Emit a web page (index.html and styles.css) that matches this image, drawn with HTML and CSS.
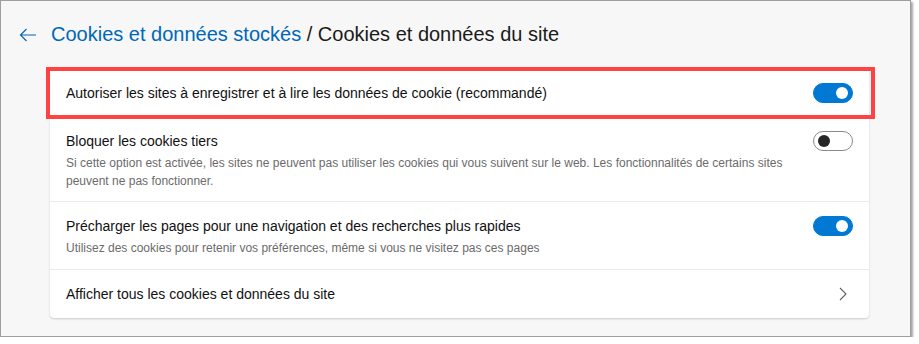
FILE: index.html
```html
<!DOCTYPE html>
<html>

<head>
    <title>Cookies et données du site</title>
    <link rel="stylesheet" href="styles.css">
</head>

<body>
    <div class="window">
        <div class="header">
            <button class="back" aria-label="Retour">
                <svg width="18" height="14" viewBox="0 0 18 14">
                    <path d="M17 7H1.5M7.5 1L1.5 7l6 6" fill="none" stroke="#0067b8" stroke-width="1.2" />
                </svg>
            </button>
            <h1><a class="crumb" href="#">Cookies et données stockés</a> / Cookies et données du site</h1>
        </div>

        <div class="card">
            <div class="row row-highlight">
                <div class="row-text">
                    <div class="row-title">Autoriser les sites à enregistrer et à lire les données de cookie (recommandé)</div>
                </div>
                <span class="toggle on"></span>
            </div>

            <div class="row row-block">
                <div class="row-text">
                    <div class="row-title">Bloquer les cookies tiers</div>
                    <div class="row-desc">Si cette option est activée, les sites ne peuvent pas utiliser les cookies qui vous suivent sur le web. Les fonctionnalités de certains sites peuvent ne pas fonctionner.</div>
                </div>
                <span class="toggle"></span>
            </div>

            <div class="row row-preload">
                <div class="row-text">
                    <div class="row-title">Précharger les pages pour une navigation et des recherches plus rapides</div>
                    <div class="row-desc">Utilisez des cookies pour retenir vos préférences, même si vous ne visitez pas ces pages</div>
                </div>
                <span class="toggle on"></span>
            </div>

            <div class="row row-link">
                <div class="row-text">
                    <div class="row-title">Afficher tous les cookies et données du site</div>
                </div>
                <svg class="chevron" width="8" height="14" viewBox="0 0 8 14">
                    <path d="M1 1l6 6-6 6" fill="none" stroke="#616161" stroke-width="1.1" />
                </svg>
            </div>
        </div>
    </div>
</body>

</html>
```

FILE: styles.css
```css
body {
    margin: 0;
    background-color: #fff;
    font-family: "Liberation Sans", Arial, sans-serif;
    color: #1b1b1b;
}

.window {
    width: 911px;
    height: 337px;
    box-sizing: border-box;
    border: 1px solid #9e9e9e;
    background-color: #f7f7f7;
    box-shadow: 2px 2px 2px rgba(0, 0, 0, 0.35);
    padding: 0 0 0 49px;
}

.header {
    display: flex;
    align-items: center;
    height: 67px;
    margin-left: -49px;
    padding-left: 18px;
    box-sizing: border-box;
}

.back {
    background: none;
    border: none;
    padding: 0;
    width: 32px;
    height: 20px;
    display: flex;
    align-items: center;
    cursor: pointer;
}

h1 {
    margin: 0;
    font-size: 20px;
    font-weight: normal;
    color: #1b1b1b;
}

.crumb {
    color: #0067b8;
    text-decoration: none;
}

.card {
    width: 819px;
    background-color: #fff;
    border-radius: 4px;
    box-shadow: 0 1px 2px rgba(0, 0, 0, 0.18);
}

.row {
    display: flex;
    align-items: center;
    padding: 12px 16px;
    border-top: 1px solid #ebebeb;
}

.row:first-child {
    border-top: none;
}

/* annotation frame drawn over the first row */
.row-highlight {
    height: 50px;
    box-sizing: border-box;
    position: relative;
}

.row-highlight::after {
    content: "";
    position: absolute;
    top: -1px;
    left: -4px;
    right: -6px;
    bottom: -1px;
    border: 4px solid #ff4242;
    pointer-events: none;
}

.row-block {
    padding-bottom: 11px;
}

.row-preload {
    padding-top: 14px;
}

.row-link {
    padding-top: 14px;
    padding-bottom: 14px;
}

.row-text {
    flex: 1;
    padding-right: 16px;
}

.row-title {
    font-size: 14px;
    line-height: 20px;
    color: #111;
}

.row-desc {
    font-size: 12px;
    line-height: 18px;
    color: #6b6b6b;
    margin-top: 3px;
}

.toggle {
    width: 40px;
    height: 20px;
    box-sizing: border-box;
    border: 1px solid #8a8a8a;
    border-radius: 10px;
    background-color: #fff;
    position: relative;
    flex-shrink: 0;
    align-self: flex-start;
}

.toggle::after {
    content: "";
    position: absolute;
    top: 3px;
    left: 4px;
    width: 12px;
    height: 12px;
    border-radius: 50%;
    background-color: #262626;
}

.toggle.on {
    border-color: #0078d4;
    background-color: #0078d4;
}

.toggle.on::after {
    left: auto;
    right: 4px;
    background-color: #fff;
}

.row-highlight .toggle {
    align-self: center;
}

.chevron {
    margin-right: 6px;
}
```
